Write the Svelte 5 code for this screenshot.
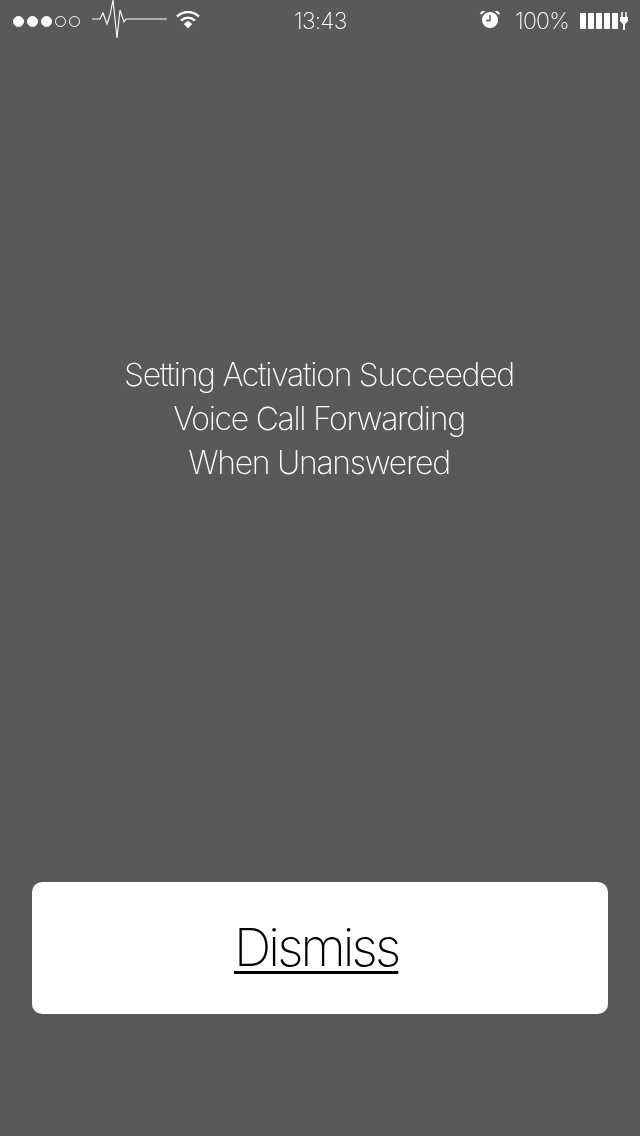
<script lang="ts">
	const lines = ['Setting Activation Succeeded', 'Voice Call Forwarding', 'When Unanswered'];
	const signal = [true, true, true, false, false];
</script>

<div class="screen">
	<header class="status">
		<div class="left">
			<div class="dots">
				{#each signal as on}
					<span class="dot" class:on></span>
				{/each}
			</div>
			<svg class="pulse" width="76" height="42" viewBox="0 0 76 42">
				<path d="M0 19H8L11 13L15 24L18 15L21 0L25 38L28 10L32 22L34 19H75" fill="none" stroke="#fff" stroke-width="1.100" />
			</svg>
			<svg class="wifi" width="26" height="20" viewBox="0 2 26 20">
				<path d="M2 7.500C8.500 1.500 17.500 1.500 24 7.500" fill="none" stroke="#fff" stroke-width="2.400" />
				<path d="M6 11.500C10.500 7.800 15.500 7.800 20 11.500" fill="none" stroke="#fff" stroke-width="2.400" />
				<path d="M8.800 15L13 11.800L17.200 15L13 19.500Z" fill="#fff" />
			</svg>
		</div>
		<div class="time">13:43</div>
		<div class="right">
			<svg class="alarm" width="22" height="20" viewBox="0 2 22 20">
				<circle cx="11" cy="11" r="8" fill="#fff" />
				<path d="M11 6V11.500H7" fill="none" stroke="#595959" stroke-width="1.500" />
				<path d="M1.500 5L5.500 1.500M20.500 5L16.500 1.500" stroke="#fff" stroke-width="2" />
			</svg>
			<span class="percent">100%</span>
			<div class="battery">
				{#each [1, 2, 3, 4, 5] as cell}
					<span class="cell" data-cell={cell}></span>
				{/each}
				<svg class="plug" width="8" height="18" viewBox="0 0 8 18">
					<path d="M2 0V5M6 0V5" stroke="#fff" stroke-width="1.500" />
					<path d="M0 5H8V9L5 12V18H3V12L0 9Z" fill="#fff" />
				</svg>
			</div>
		</div>
	</header>

	<main class="message">
		{#each lines as line}
			<div>{line}</div>
		{/each}
	</main>

	<div class="actions">
		<button type="button" class="dismiss"><span>Dismiss</span></button>
	</div>
</div>

<style>
	:global(body) {
		margin: 0;
		background: #595959;
	}

	.screen {
		height: 1136px;
		display: flex;
		flex-direction: column;
		background: #595959;
		color: #fff;
		font-family: Inter, "Liberation Sans", sans-serif;
		font-weight: 200;
		overflow: hidden;
	}

	.status {
		height: 42px;
		display: grid;
		grid-template-columns: 1fr auto 1fr;
		align-items: center;
		padding: 0 12px 0 13px;
	}

	.left,
	.right,
	.dots,
	.battery {
		display: flex;
		align-items: center;
	}

	.left {
		gap: 9px;
	}

	.right {
		justify-content: flex-end;
	}

	.dots {
		gap: 3px;
		margin-right: 3px;
	}

	.dot {
		width: 9px;
		height: 9px;
		border: 1px solid #fff;
		border-radius: 50%;
	}

	.dot.on {
		background: #fff;
	}

	.wifi {
		margin-left: -2px;
	}

	/* own layer, so the text is antialiased in gray like the reference */
	.time,
	.percent,
	.message,
	.dismiss span {
		will-change: transform;
	}

	.time {
		font-size: 23px;
		letter-spacing: -0.800px;
		padding-right: 1px;
	}

	.percent {
		font-size: 23px;
		letter-spacing: -0.800px;
		margin: 0 11px 0 14px;
	}

	.battery {
		gap: 2px;
	}

	.cell {
		width: 6px;
		height: 16px;
		background: #fff;
		border-radius: 1px;
	}

	.message {
		margin-top: 311px;
		height: 529px;
		padding-right: 2px;
		font-size: 32px;
		line-height: 44px;
		text-align: center;
		letter-spacing: -1.300px;
	}

	.actions {
		padding: 0 32px;
	}

	.dismiss {
		display: block;
		width: 100%;
		height: 132px;
		border: none;
		border-radius: 10px;
		background: #fff;
		color: #000;
		font: inherit;
		font-size: 52px;
		padding: 0 8px 2px 0;
	}

	.dismiss span {
		display: inline-block;
		letter-spacing: -2.900px;
		text-decoration: underline;
		text-decoration-thickness: 3px;
		text-underline-offset: 5px;
	}
</style>
